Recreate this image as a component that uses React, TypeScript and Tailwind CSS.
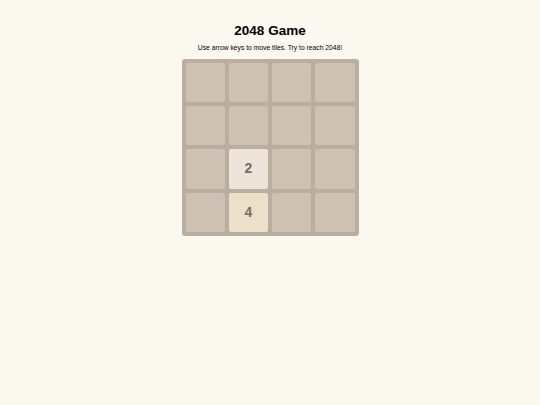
const board = [
  [0, 0, 0, 0],
  [0, 0, 0, 0],
  [0, 2, 0, 0],
  [0, 4, 0, 0],
]

function Tile({ value }: { value: number }) {
  if (value === 2) {
    return (
      <div className="flex items-center justify-center rounded-[2px] bg-[#eee4da] text-[14px] font-bold text-[#776e65] aspect-square">
        2
      </div>
    )
  }
  if (value === 4) {
    return (
      <div className="flex items-center justify-center rounded-[2px] bg-[#ede0c8] text-[14px] font-bold text-[#776e65] aspect-square">
        4
      </div>
    )
  }
  return <div className="rounded-[2px] bg-[#cdc1b4] aspect-square" />
}

export default function App() {
  return (
    <div className="min-h-screen w-full bg-[#faf8ef] flex flex-col items-center pt-[24px] font-['Liberation_Sans',Arial,sans-serif] text-black">
      <h1 className="text-[13.5px] leading-none font-bold">2048 Game</h1>
      <p className="mt-[7.5px] text-[6.75px] leading-none">Use arrow keys to move tiles. Try to reach 2048!</p>
      <div className="mt-[7px] w-[177px] rounded-[3px] bg-[#bbada0] p-1 grid grid-cols-4 gap-1">
        {board.flat().map((v, i) => (
          <Tile key={i} value={v} />
        ))}
      </div>
    </div>
  )
}
